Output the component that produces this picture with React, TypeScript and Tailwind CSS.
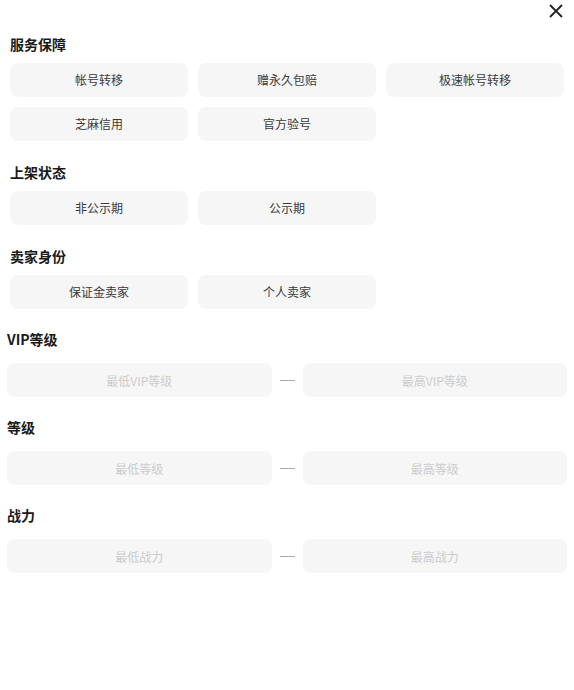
import React from "react";

const font = { fontFamily: '"Noto Sans CJK SC", "Noto Sans", sans-serif' };

const serviceOptions = ["帐号转移", "赠永久包赔", "极速帐号转移", "芝麻信用", "官方验号"];
const statusOptions = ["非公示期", "公示期"];
const sellerOptions = ["保证金卖家", "个人卖家"];

const ranges = [
  { title: "VIP等级", min: "最低VIP等级", max: "最高VIP等级" },
  { title: "等级", min: "最低等级", max: "最高等级" },
  { title: "战力", min: "最低战力", max: "最高战力" },
];

function OptionSection({ title, options, first }: { title: string; options: string[]; first?: boolean }) {
  return (
    <section className={first ? "" : "mt-[21px]"}>
      <h3 className="text-[14px] leading-[20px] font-semibold text-[#1a1a1a] mb-[9px]">{title}</h3>
      <div className="grid grid-cols-3 gap-[10px]">
        {options.map((opt) => (
          <button
            key={opt}
            className="h-[34px] rounded-[8px] bg-[#f6f6f6] text-[12px] text-[#3a3a3a] flex items-center justify-center"
          >
            {opt}
          </button>
        ))}
      </div>
    </section>
  );
}

function RangeSection({ title, min, max }: { title: string; min: string; max: string }) {
  return (
    <section className="mt-[20px]">
      <h3 className="text-[14px] leading-[20px] font-semibold text-[#1a1a1a] mb-[14px]">{title}</h3>
      <div className="flex items-center">
        <input
          placeholder={min}
          className="flex-1 min-w-0 h-[34px] rounded-[8px] bg-[#f6f6f6] text-[12px] text-center text-[#333] placeholder:text-[#cccccc] outline-none"
        />
        <div className="w-[31px] flex justify-center">
          <div className="w-[15px] h-px bg-[#aaa]" />
        </div>
        <input
          placeholder={max}
          className="flex-1 min-w-0 h-[34px] rounded-[8px] bg-[#f6f6f6] text-[12px] text-center text-[#333] placeholder:text-[#cccccc] outline-none"
        />
      </div>
    </section>
  );
}

export default function App() {
  return (
    <div className="w-full min-h-[690px] bg-white" style={font}>
      {/* Close */}
      <div className="h-[34px] flex justify-end items-start pt-[4px] pr-[11px]">
        <svg width="14" height="14" viewBox="0 0 14 14" fill="none" stroke="#222" strokeWidth="1.8">
          <path d="M1 1L13 13M13 1L1 13" />
        </svg>
      </div>

      <div className="px-[10px]">
        <OptionSection title="服务保障" options={serviceOptions} first />
        <OptionSection title="上架状态" options={statusOptions} />
        <OptionSection title="卖家身份" options={sellerOptions} />
      </div>

      <div className="px-[7px]">
        {ranges.map((r) => (
          <RangeSection key={r.title} {...r} />
        ))}
      </div>
    </div>
  );
}
